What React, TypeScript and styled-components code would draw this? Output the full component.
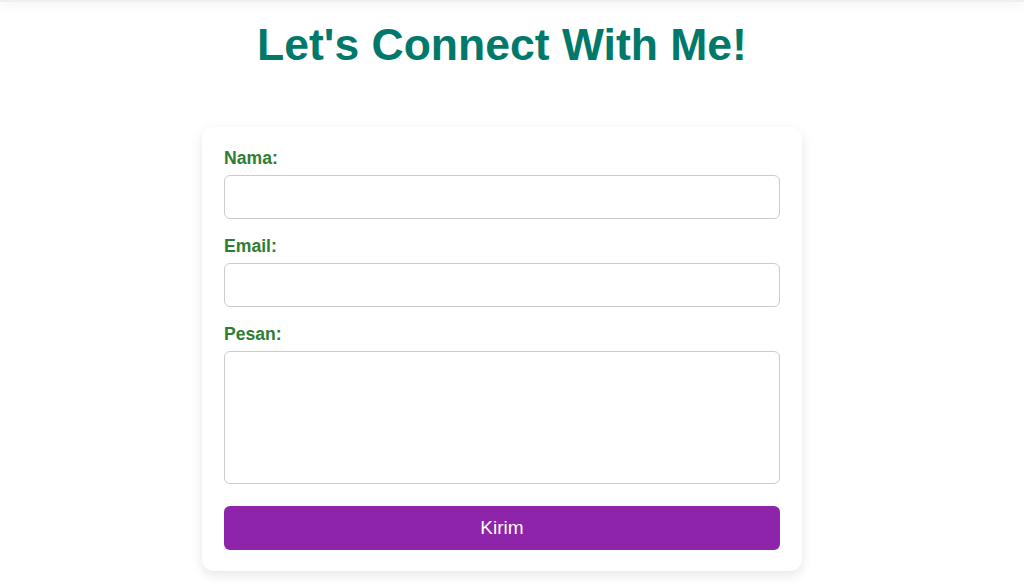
import styled, { createGlobalStyle } from "styled-components";

const GlobalStyle = createGlobalStyle`
  * {
    box-sizing: border-box;
  }

  body {
    margin: 0;
    background: #ffffff;
    font-family: "Liberation Sans", Arial, sans-serif;
  }
`;

const TopShade = styled.div`
  height: 2px;
  background: #efefef;
  box-shadow: 0 2px 10px rgba(0, 0, 0, 0.14);
`;

const Page = styled.main`
  display: flex;
  flex-direction: column;
  align-items: center;
  padding: 0 20px 40px 0;
`;

const Title = styled.h1`
  margin: 17px 0 57px;
  font-size: 44.5px;
  line-height: 51px;
  font-weight: 700;
  color: #00796b;
  text-align: center;
`;

const Card = styled.form`
  width: 600px;
  display: flex;
  flex-direction: column;
  padding: 21px 22px 21px;
  background: #ffffff;
  border-radius: 12px;
  box-shadow: 0 4px 12px rgba(0, 0, 0, 0.1);
`;

const Field = styled.div`
  display: flex;
  flex-direction: column;
  gap: 7px;
  margin-bottom: 17px;

  &:last-of-type {
    margin-bottom: 22px;
  }
`;

const Label = styled.label`
  font-size: 17.6px;
  line-height: 20px;
  font-weight: 700;
  color: #2e7d32;
`;

const Input = styled.input`
  height: 44px;
  padding: 10px;
  border: 1px solid #cccccc;
  border-radius: 6px;
  font-size: 16px;
  font-family: inherit;
`;

const TextArea = styled.textarea`
  height: 133px;
  padding: 10px;
  border: 1px solid #cccccc;
  border-radius: 6px;
  font-size: 16px;
  font-family: inherit;
  resize: none;
`;

const SubmitButton = styled.button`
  height: 44px;
  border: none;
  border-radius: 6px;
  background: #8e24aa;
  color: #ffffff;
  font-size: 19px;
  font-family: inherit;
  cursor: pointer;
`;

const App = () => {
  return (
    <>
      <GlobalStyle />
      <TopShade />
      <Page>
        <Title>Let's Connect With Me!</Title>
        <Card onSubmit={(e) => e.preventDefault()}>
          <Field>
            <Label htmlFor="nama">Nama:</Label>
            <Input id="nama" type="text" />
          </Field>
          <Field>
            <Label htmlFor="email">Email:</Label>
            <Input id="email" type="email" />
          </Field>
          <Field>
            <Label htmlFor="pesan">Pesan:</Label>
            <TextArea id="pesan" />
          </Field>
          <SubmitButton type="submit">Kirim</SubmitButton>
        </Card>
      </Page>
    </>
  );
};

export default App;
